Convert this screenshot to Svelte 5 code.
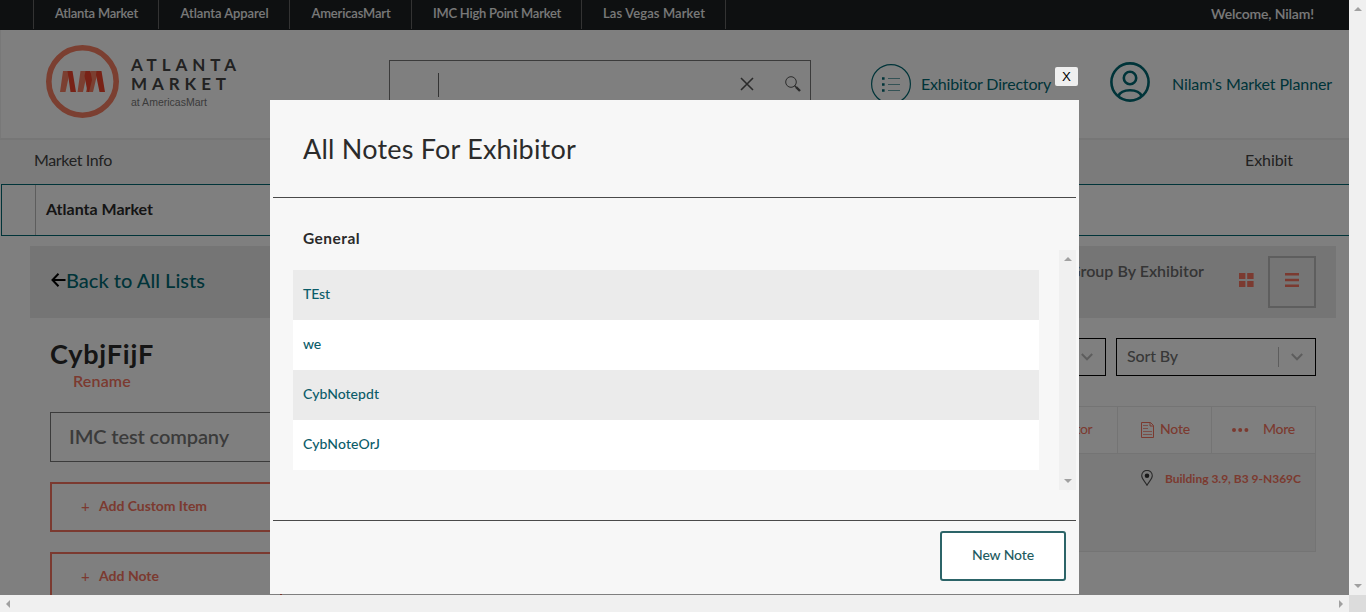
<script>
  const markets = [
    { name: 'Atlanta Market', cell: 125, text: 83 },
    { name: 'Atlanta Apparel', cell: 131, text: 88 },
    { name: 'AmericasMart', cell: 122, text: 79 },
    { name: 'IMC High Point Market', cell: 170, text: 128 },
    { name: 'Las Vegas Market', cell: 144, text: 102 }
  ];
  const notes = [
    { title: 'TEst', text: 27 },
    { title: 'we', text: 18 },
    { title: 'CybNotepdt', text: 76 },
    { title: 'CybNoteOrJ', text: 77 }
  ];

  // Tracks a label so that it fills the given width in pixels.
  function track(node, width) {
    node.style.display = 'inline-block';
    node.style.whiteSpace = 'nowrap';
    const natural = node.getBoundingClientRect().width;
    node.style.letterSpacing = (width - natural) / node.textContent.length + 'px';
  }
</script>

<div class="window">
  <div class="view">
    <div class="page">
      <nav class="topbar">
        {#each markets as m}
          <a class="market" style:width="{m.cell}px"><span use:track={m.text}>{m.name}</span></a>
        {/each}
        <div class="welcome"><span use:track={103}>Welcome, Nilam!</span></div>
      </nav>

      <header>
        <div class="logo">
          <svg width="74" height="74" viewBox="0 0 74 74">
            <circle cx="36.500" cy="36.500" r="33.700" fill="none" stroke="#f77f62" stroke-width="5.6" />
            <path fill="#f77f62" d="M17 26h7l-4.500 21H14zM34.500 26h7L37 47h-5.500zM45 26h7l-5 21h-7z" />
            <path fill="#f0452c" d="M21.500 26h5L30 47h-5.500zM39.500 26h5l1.500 9-3 12h-1.500l-3-16zM50.500 26h5l3.500 21h-5.500l-3.500-17z" />
          </svg>
          <div class="logo-text">
            <b><span use:track={110}>ATLANTA</span></b>
            <b><span use:track={100}>MARKET</span></b>
            <small><span use:track={76}>at AmericasMart</span></small>
          </div>
        </div>
        <div class="search">
          <i class="caret"></i>
          <svg class="clear" width="14" height="14" viewBox="0 0 14 14"><path d="M1 1l12 12M13 1L1 13" stroke="#555" stroke-width="1.6" /></svg>
          <svg width="16" height="16" viewBox="0 0 16 16" fill="none" stroke="#555"><circle cx="6" cy="6" r="5.300" stroke-width="1" /><path d="M9.5 9.5l1.5 1.5" stroke-width="1.2" /><path d="M11 11l4 4" stroke-width="2.4" /></svg>
        </div>
        <a class="directory">
          <svg width="40" height="40" viewBox="0 0 40 40" fill="none" stroke="#006872">
            <circle cx="20" cy="20" r="19.4" stroke-width="1.2" />
            <path d="M17 14.5h12M17 20.5h12M17 26.5h12" stroke-width="1" opacity=".6" />
            <path d="M11 14.5h2.600M11 20.5h2.600M11 26.5h2.600" stroke-width="2.6" />
          </svg>
          <span use:track={130}>Exhibitor Directory</span>
        </a>
        <a class="planner">
          <svg width="40" height="40" viewBox="0 0 40 40" fill="none" stroke="#006872" stroke-width="2.6">
            <circle cx="20" cy="20" r="18.6" /><circle cx="20" cy="16" r="6.2" />
            <path d="M8.500 34c3-7.600 20-7.600 23 0" />
          </svg>
          <span use:track={160}>Nilam's Market Planner</span>
        </a>
      </header>

      <div class="menu"><span use:track={78}>Market Info</span><span use:track={48}>Exhibit</span></div>
      <div class="crumb"><b><span use:track={107}>Atlanta Market</span></b></div>

      <div class="toolbar">
        <a class="back">
          <svg width="15" height="14" viewBox="0 0 15 14" fill="none" stroke="#000" stroke-width="2"><path d="M7.5 .8L1.5 7l6 6.2M1.5 7H14.5" /></svg>
          <span use:track={139}>Back to All Lists</span>
        </a>
        <div class="group"><span use:track={135}>Group By Exhibitor</span></div>
        <svg class="tiles" width="15" height="14" viewBox="0 0 15 14" fill="#f77460"><path d="M0 0h6.4v6H0zM8.2 0h6.4v6H8.2zM0 8h6.4v6H0zM8.2 8h6.4v6H8.2z" /></svg>
        <div class="rows"><svg width="14" height="14" viewBox="0 0 14 14" fill="#f77460"><path d="M0 0h14v2.6H0zM0 5.7h14v2.6H0zM0 11.4h14V14H0z" /></svg></div>
      </div>

      <main>
        <aside>
          <h1><span use:track={104}>CybjFijF</span></h1>
          <a class="rename"><span use:track={58}>Rename</span></a>
          <div class="field"><span use:track={160}>IMC test company</span></div>
          <button class="add"><i>+</i><span use:track={108}>Add Custom Item</span></button>
          <button class="add"><i>+</i><span use:track={60}>Add Note</span></button>
        </aside>
        <section>
          <div class="selects">
            <div class="select"><svg width="12" height="8" viewBox="0 0 12 8"><path d="M.8 1L6 6.3 11.2 1" /></svg></div>
            <div class="select"><span use:track={51}>Sort By</span><i></i><svg width="12" height="8" viewBox="0 0 12 8"><path d="M.8 1L6 6.3 11.2 1" /></svg></div>
          </div>
          <div class="card">
            <div class="actions">
              <div class="action first"><span use:track={51}>Exhibitor</span></div>
              <div class="action note">
                <svg width="13" height="16" viewBox="0 0 13 16" fill="none" stroke="#f77460"><path d="M.5.5h9l3 3v12H.5zM9 .5v3.500h3.500" /><path d="M2 3.500h5M2 6.500h5M2 9.500h9M2 12.500h9" opacity=".7" /></svg>
                <span use:track={30}>Note</span>
              </div>
              <div class="action more">
                <svg width="17" height="4" viewBox="0 0 17 4" fill="#f77460"><circle cx="2" cy="2" r="2" /><circle cx="8.2" cy="2" r="2" /><circle cx="14.4" cy="2" r="2" /></svg>
                <span use:track={32}>More</span>
              </div>
            </div>
            <div class="place">
              <svg width="12" height="16" viewBox="0 0 12 16"><path d="M6 15.3C4.500 12 .7 9 .7 5.700a5.300 5.300 0 0110.600 0C11.300 9 7.500 12 6 15.300z" fill="none" stroke="#555" stroke-width="1.1" /><circle cx="6" cy="5.800" r="2.300" fill="#333" /></svg>
              <b><span use:track={136}>Building 3.9, B3 9-N369C</span></b>
            </div>
          </div>
        </section>
      </main>
    </div>

    <div class="overlay">
      <div class="modal">
        <button class="close">X</button>
        <h2><span use:track={273}>All Notes For Exhibitor</span></h2>
        <div class="body">
          <div class="listing">
            <h3><span use:track={57}>General</span></h3>
            {#each notes as n}
              <a class="item"><span use:track={n.text}>{n.title}</span></a>
            {/each}
          </div>
          <div class="bar inner"><i class="up"></i><i class="down"></i></div>
        </div>
        <footer><button class="new"><span use:track={62}>New Note</span></button></footer>
      </div>
    </div>
  </div>
  <div class="bar"><i class="up"></i><i class="down"></i></div>
  <div class="bar wide"><i class="left"></i><i class="right"></i></div>
  <div class="corner"></div>
</div>

<style>
  :global(body) { overflow: hidden; }
  * { box-sizing: border-box; }
  .window { display: grid; grid-template: 595px 17px / 1349px 17px; width: 1366px; height: 612px; font-family: Lato, sans-serif; color: #444; font-size: 16px; }
  .view { position: relative; overflow: hidden; background: #fff; }
  .page { height: 595px; overflow: hidden; }
  svg { display: block; flex: none; }
  h1, h2, h3 { margin: 0; }
  button { font-family: inherit; margin: 0; padding: 0; }

  .topbar { display: flex; height: 30px; padding-left: 33px; background: #1c2023; color: #f2f2f2; font-size: 13px; font-weight: 600; }
  .market, .welcome { display: flex; justify-content: center; height: 29px; line-height: 27px; border-left: 1px solid #666; }
  .market { padding-left: 1px; }
  .welcome { flex: 1; justify-content: flex-end; padding-right: 35px; font-size: 14px; line-height: 28px; }

  header { display: flex; align-items: flex-start; height: 110px; border-bottom: 2px solid #ececec; border-left: 1px solid #f0f0f0; color: #006872; }
  .logo { display: flex; gap: 11px; width: 388px; padding: 15px 0 0 45px; color: #444; }
  .logo-text { display: flex; flex-direction: column; padding-top: 10px; }
  .logo-text b { height: 19px; line-height: 19px; font-size: 17px; }
  .logo-text b span { line-height: 17px; }
  .logo-text small { font: 10.500px/18px "Liberation Sans", sans-serif; color: #777; }
  .search { display: flex; align-items: center; width: 422px; height: 50px; margin-top: 30px; padding: 0 9px 0 48px; border: 1px solid #777; }
  .search svg { position: relative; top: -1px; }
  .caret { width: 1px; height: 24px; background: #666; }
  .clear { margin: 0 31px 0 auto; }
  .directory { display: flex; align-items: center; gap: 10px; width: 239px; margin: 34px 0 0 60px; }
  .planner { display: flex; align-items: center; gap: 22px; margin-top: 32px; }
  .planner span { position: relative; top: 1px; }
  .directory span { position: relative; top: -1px; }

  .menu { display: flex; justify-content: space-between; height: 44px; line-height: 39px; padding: 0 56px 0 34px; background: #f6f6f6; }
  .crumb { width: 1360px; height: 52px; margin-left: 1px; border: 1px solid #006872; line-height: 48px; padding-left: 33px; color: #2b2b2b; }
  .crumb b { display: block; padding-left: 10px; border-left: 1px solid #bbb; height: 50px; }

  .toolbar { display: flex; width: 1306px; height: 72px; margin: 10px 0 0 30px; padding: 0 20px 0 21px; background: #ebebeb; }
  .back { display: flex; align-items: center; height: 68px; color: #006872; font-size: 20px; font-weight: 500; }
  .group { margin: 15px 35px 0 auto; color: #6a6a6a; font-weight: 600; }
  .tiles { margin-top: 27px; }
  .rows { width: 48px; height: 52px; margin: 10px 0 0 14px; padding: 15px; border: 2px solid #bdbdbd; }

  main { display: flex; padding: 20px 33px 0 50px; }
  aside { display: flex; flex-direction: column; align-items: flex-start; width: 232px; }
  h1 { height: 34px; line-height: 32px; font-size: 27px; color: #2b2b2b; }
  .rename { height: 20px; line-height: 18px; margin-left: 23px; color: #f77460; font-weight: 600; }
  .field { width: 232px; height: 50px; margin: 20px 0; padding-left: 18px; line-height: 46px; border: 1px solid #777; color: #777; font-size: 20px; font-weight: 600; }
  .add { display: flex; align-items: center; flex: none; width: 232px; height: 50px; margin-bottom: 20px; padding: 0 0 3px 29px; border: 2px solid #f77460; background: none; color: #f77460; font-size: 14px; font-weight: 700; }
  .add i { width: 18px; text-align: left; font-style: normal; font-size: 15px; font-weight: 400; }
  section { display: flex; flex-direction: column; align-items: flex-end; flex: 1; }
  .selects { display: flex; gap: 10px; }
  .select { display: flex; align-items: center; justify-content: flex-end; width: 200px; height: 38px; padding: 0 12px 0 10px; border: 1px solid #000; color: #707070; font-weight: 500; }
  .select span { margin: 0 auto 3px 0; }
  .select i { width: 1px; height: 20px; margin-right: 12px; background: #bbb; }
  .select svg { fill: none; stroke: #bbb; stroke-width: 2; }
  .card { width: 700px; height: 146px; margin-top: 30px; border: 1px solid #e8e8e8; background: #f5f5f5; }
  .actions { display: flex; justify-content: flex-end; height: 47px; border-bottom: 1px solid #e8e8e8; background: #fff; color: #f77460; font-size: 14px; }
  .action { display: flex; align-items: center; border-left: 1px solid #e8e8e8; }
  .action span { margin-bottom: 3px; }
  .first { width: 110px; padding-left: 33px; }
  .note { width: 94px; padding-left: 23px; gap: 6px; font-weight: 500; }
  .more { width: 104px; padding-left: 20px; gap: 14px; font-weight: 500; }
  .place { display: flex; align-items: center; justify-content: flex-end; gap: 12px; height: 48px; padding-right: 14px; color: #f77460; font-size: 12px; }

  .overlay { position: absolute; inset: 0; padding: 100px 0 0 270px; background: rgba(0, 0, 0, .5); }
  .modal { position: relative; display: flex; flex-direction: column; width: 809px; height: 494px; padding: 0 3px; background: #f7f7f7; color: #2b2b2b; }
  .close { position: absolute; top: -33px; right: 1px; width: 23px; height: 19px; border: 0; border-radius: 2px; background: #efefef; color: #000; font: 13.300px/19px "Liberation Sans", sans-serif; }
  h2 { height: 98px; padding-left: 30px; border-bottom: 1px solid #4a4a4a; font-size: 27px; font-weight: 400; line-height: 98px; }
  .body { display: flex; justify-content: space-between; height: 322px; padding: 0 0 0 20px; }
  .listing { width: 746px; }
  h3 { height: 72px; padding: 0 10px; line-height: 80px; font-size: 15.500px; }
  .item { display: block; height: 50px; padding-left: 10px; line-height: 48px; color: #0b5c69; font-size: 14px; font-weight: 500; background: #fff; }
  .item:nth-of-type(odd) { background: #ebebeb; }
  footer { display: flex; justify-content: flex-end; flex: 1; padding: 10px 10px 0 0; border-top: 1px solid #4a4a4a; }
  .new { width: 126px; height: 50px; padding-bottom: 3px; border: 2px solid #2c6468; border-radius: 3px; background: #fff; color: #1e5b61; font-size: 14px; font-weight: 500; }

  .bar { display: flex; flex-direction: column; align-items: center; justify-content: space-between; background: #f0f0f0; padding: 7px 0; }
  .bar i { border: 4px solid transparent; }
  .bar .up { border-top: 0; border-bottom-color: #a0a0a0; }
  .bar .down { border-bottom: 0; border-top-color: #a0a0a0; }
  .bar .left { border-left: 0; border-right-color: #a0a0a0; }
  .bar .right { border-right: 0; border-left-color: #a0a0a0; }
  .wide { flex-direction: row; padding: 0 6px; }
  .inner { width: 17px; height: 240px; margin-top: 52px; }
  .corner { background: #dcdcdc; }
</style>
